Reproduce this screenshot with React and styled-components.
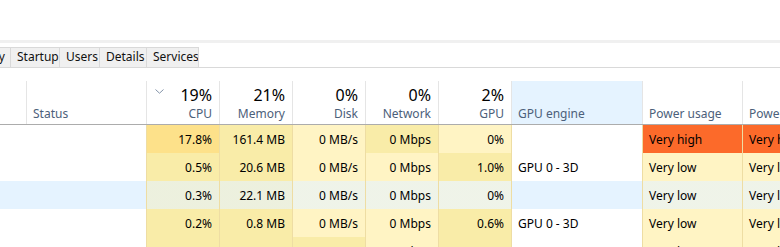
import React from "react";
import styled, { createGlobalStyle } from "styled-components";

const Global = createGlobalStyle`
  html, body { margin: 0; padding: 0; background: #fff; overflow: hidden; }
  body {
    font-family: "Noto Sans", "Open Sans", sans-serif;
    font-size: 12px;
    color: #000;
  }
`;

const COLS = "26px 120px 73px 73px 73px 73px 73px 131px 100px 100px";
const SEP = "#eedda3";
const HEAT = ["#fff4c4", "#f9eca8", "#fbe49a", "#fde18a"];
const HOVER_TINT = "rgba(229, 243, 255, 0.62)";

const Page = styled.div`
  width: 780px;
  height: 247px;
  overflow: hidden;
  display: flex;
  flex-direction: column;
`;

const MenuArea = styled.div`
  flex: none;
  height: 40px;
`;

const Band = styled.div`
  flex: none;
  height: 3px;
  background: #f0f0f0;
`;

const TabBar = styled.div`
  flex: none;
  margin-top: 4px;
  height: 20px;
  border-bottom: 1px solid #d9d9d9;
  display: flex;
`;

const TabTrack = styled.div`
  width: 199px;
  overflow: hidden;
  display: flex;
  justify-content: flex-end;
`;

const Tab = styled.div`
  flex: 0 0 ${(p) => (p.$w ? `${p.$w}px` : "auto")};
  box-sizing: border-box;
  height: 20px;
  border: 1px solid #d9d9d9;
  border-bottom: none;
  border-right: ${(p) => (p.$last ? "1px solid #d9d9d9" : "none")};
  background: #f0f0f0;
  padding: 0 5px 0 6px;
  line-height: 18px;
  white-space: nowrap;
  overflow: hidden;
  color: #111;
`;

const HeaderRow = styled.div`
  flex: none;
  margin-top: 13px;
  display: grid;
  grid-template-columns: ${COLS};
  border-bottom: 1px solid #acacac;
`;

const HeaderCell = styled.div`
  box-sizing: border-box;
  height: 43px;
  border-left: ${(p) => (p.$first ? "none" : "1px solid #e5e5e5")};
  background: ${(p) => (p.$hl ? "#e5f3ff" : "transparent")};
  padding: 2px 7px 2px 6px;
  display: flex;
  flex-direction: column;
  justify-content: flex-end;
  align-items: ${(p) => (p.$right ? "stretch" : "flex-start")};
  white-space: nowrap;
  overflow: hidden;
`;

const Percent = styled.div`
  display: flex;
  justify-content: ${(p) => (p.$sorted ? "space-between" : "flex-end")};
  align-items: flex-start;
  font-size: 16px;
  line-height: 22px;
  color: #000;
`;

const Chevron = styled.svg`
  margin: 5px 0 0 2px;
  flex: none;
`;

const Label = styled.div`
  font-size: 12px;
  line-height: 16px;
  color: #4c607a;
  text-align: ${(p) => (p.$right ? "right" : "left")};
`;

const Rows = styled.div`
  display: flex;
  flex-direction: column;
`;

const DataRow = styled.div`
  flex: none;
  display: grid;
  grid-template-columns: ${COLS};
  height: 28px;
`;

const Cell = styled.div`
  box-sizing: border-box;
  border-left: 1px solid ${(p) => (p.$plain ? "transparent" : SEP)};
  background-color: ${(p) => p.$bg || "#fff"};
  background-image: ${(p) =>
    p.$hover ? `linear-gradient(${HOVER_TINT}, ${HOVER_TINT})` : "none"};
  padding: 1px 7px 0 6px;
  display: flex;
  align-items: center;
  justify-content: ${(p) => (p.$right ? "flex-end" : "flex-start")};
  line-height: 27px;
  white-space: nowrap;
  overflow: hidden;
  color: #000;
`;

const PlainCell = styled(Cell)`
  background-color: ${(p) => (p.$hover ? "#e5f3ff" : "#fff")};
  background-image: none;
`;

const POWER = { high: "#fc6a2a", low: HEAT[0] };

const rows = [
  { cpu: ["17.8%", 3], mem: ["161.4 MB", 1], disk: ["0 MB/s", 0], net: ["0 Mbps", 1], gpu: ["0%", 0], eng: "", power: "high" },
  { cpu: ["0.5%", 1], mem: ["20.6 MB", 1], disk: ["0 MB/s", 0], net: ["0 Mbps", 0], gpu: ["1.0%", 1], eng: "GPU 0 - 3D", power: "low" },
  { cpu: ["0.3%", 1], mem: ["22.1 MB", 1], disk: ["0 MB/s", 0], net: ["0 Mbps", 0], gpu: ["0%", 0], eng: "", power: "low", hover: true },
  { cpu: ["0.2%", 1], mem: ["0.8 MB", 1], disk: ["0 MB/s", 0], net: ["0 Mbps", 0], gpu: ["0.6%", 1], eng: "GPU 0 - 3D", power: "low" },
  { cpu: ["0.1%", 1], mem: ["0.1 MB", 1], disk: ["0.1 MB/s", 1], net: ["0 Mbps", 0], gpu: ["0.1%", 1], eng: "GPU 0 - 3D", power: "low" },
];

const tabs = [
  { name: "App history" },
  { name: "Startup", w: 49 },
  { name: "Users", w: 40 },
  { name: "Details", w: 47 },
  { name: "Services", w: 53, last: true },
];

const metrics = [
  { pct: "19%", label: "CPU", sorted: true },
  { pct: "21%", label: "Memory" },
  { pct: "0%", label: "Disk" },
  { pct: "0%", label: "Network" },
  { pct: "2%", label: "GPU" },
];

export default function App() {
  return (
    <>
      <Global />
      <Page>
        <MenuArea />
        <Band />
        <TabBar>
          <TabTrack>
            {tabs.map((t) => (
              <Tab key={t.name} $w={t.w} $last={t.last}>
                {t.name}
              </Tab>
            ))}
          </TabTrack>
        </TabBar>

        <HeaderRow>
          <HeaderCell $first />
          <HeaderCell>
            <Label>Status</Label>
          </HeaderCell>
          {metrics.map((m) => (
            <HeaderCell key={m.label} $right>
              <Percent $sorted={m.sorted}>
                {m.sorted && (
                  <Chevron width="9" height="5" viewBox="0 0 9 5">
                    <polyline
                      points="0.5,0.5 4.5,4.2 8.5,0.5"
                      fill="none"
                      stroke="#8393a8"
                      strokeWidth="1"
                    />
                  </Chevron>
                )}
                <span>{m.pct}</span>
              </Percent>
              <Label $right>{m.label}</Label>
            </HeaderCell>
          ))}
          <HeaderCell $hl>
            <Label>GPU engine</Label>
          </HeaderCell>
          <HeaderCell>
            <Label>Power usage</Label>
          </HeaderCell>
          <HeaderCell>
            <Label>Power usage trend</Label>
          </HeaderCell>
        </HeaderRow>

        <Rows>
          {rows.map((r, i) => (
            <DataRow key={i}>
              <PlainCell $plain $hover={r.hover} />
              <PlainCell $plain $hover={r.hover} />
              {[r.cpu, r.mem, r.disk, r.net, r.gpu].map(([v, h], j) => (
                <Cell key={j} $right $bg={HEAT[h]} $hover={r.hover}>
                  {v}
                </Cell>
              ))}
              <PlainCell $hover={r.hover}>{r.eng}</PlainCell>
              <Cell $bg={POWER[r.power]} $hover={r.hover && r.power !== "high"}>
                {r.power === "high" ? "Very high" : "Very low"}
              </Cell>
              <Cell $bg={POWER[r.power]} $hover={r.hover && r.power !== "high"}>
                {r.power === "high" ? "Very high" : "Very low"}
              </Cell>
            </DataRow>
          ))}
        </Rows>
      </Page>
    </>
  );
}
